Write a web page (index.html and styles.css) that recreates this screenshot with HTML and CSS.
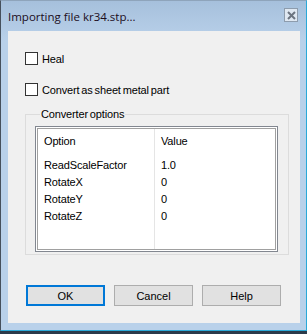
FILE: index.html
```html
<!DOCTYPE html>
<html lang="en">
<head>
    <meta charset="UTF-8">
    <title>Importing file kr34.stp...</title>
    <link rel="stylesheet" href="styles.css">
</head>
<body>
    <div class="window">
        <div class="titlebar">
            <div class="title">Importing file kr34.stp...</div>
            <div class="close">
                <svg width="9" height="9" viewBox="0 0 9 9"><path d="M1 1L8 8M8 1L1 8" stroke="#6b7480" stroke-width="2"/></svg>
            </div>
        </div>
        <div class="client">
            <label class="check"><span class="box"></span>Heal</label>
            <label class="check second"><span class="box"></span>Convert as sheet metal part</label>
            <fieldset class="group">
                <legend>Converter options</legend>
                <div class="list">
                    <div class="row head"><span class="col1">Option</span><span class="col2">Value</span></div>
                    <div class="row"><span class="col1">ReadScaleFactor</span><span class="col2">1.0</span></div>
                    <div class="row"><span class="col1">RotateX</span><span class="col2">0</span></div>
                    <div class="row"><span class="col1">RotateY</span><span class="col2">0</span></div>
                    <div class="row"><span class="col1">RotateZ</span><span class="col2">0</span></div>
                    <div class="row fill"><span class="col1"></span><span class="col2"></span></div>
                </div>
            </fieldset>
            <div class="buttons">
                <button class="btn default">OK</button>
                <button class="btn">Cancel</button>
                <button class="btn">Help</button>
            </div>
        </div>
    </div>
</body>
</html>
```
FILE: styles.css
```css
body {
    margin: 0;
    background: #2b3a4a;
    font-family: "Liberation Sans", Arial, sans-serif;
    font-size: 11px;
    letter-spacing: -0.15px;
    word-spacing: -1px;
    color: #000;
}
.window {
    width: 307px;
    height: 331px;
    box-sizing: border-box;
    border-left: 1px solid #46505c;
    border-top: 1px solid #8ea4bb;
    border-right: 1px solid #2aa9d8;
    border-bottom: 1px solid #2aa9d8;
    background: linear-gradient(#a6c0dc, #b9d1ea 40px);
    padding: 0 6px 7px 7px;
    display: flex;
    flex-direction: column;
}
.titlebar {
    height: 30px;
    display: flex;
    align-items: center;
    justify-content: space-between;
}
.title {
    font-family: "Open Sans", sans-serif;
    font-size: 11.5px;
    letter-spacing: 0;
    word-spacing: 0;
    color: #1c0d1c;
    padding-top: 1px;
}
.close {
    width: 12px;
    height: 12px;
    border: 1px solid #8d9cad;
    background: #dfe8f2;
    display: flex;
    align-items: center;
    justify-content: center;
    margin-right: 2px;
    margin-top: -2px;
}
.client {
    flex: 1;
    background: #f0f0f0;
    padding: 21px 11px 0 17px;
}
.check {
    display: flex;
    align-items: center;
    gap: 4px;
    height: 13px;
}
.check.second {
    margin-top: 18px;
}
.box {
    width: 11px;
    height: 11px;
    border: 1px solid #333;
    background: #fff;
}
.group {
    margin: 12px 0 0 0;
    padding: 6px 10px 7px 9px;
    border: 1px solid #dcdcdc;
    height: 147px;
    box-sizing: border-box;
}
.group legend {
    padding: 0 1px;
    margin-left: 5px;
}
.list {
    border: 1px solid #828790;
    padding: 1px;
    height: 126px;
    box-sizing: border-box;
    background: #fff;
    display: flex;
    flex-direction: column;
    outline: 1px solid #a0a0a0;
    outline-offset: -3px;
}
.row {
    display: flex;
    height: 17px;
    align-items: center;
}
.row.head {
    height: 28px;
    padding-bottom: 2px;
    box-sizing: border-box;
}
.row.fill {
    flex: 1;
}
.col1 {
    width: 118px;
    box-sizing: border-box;
    padding-left: 7px;
    align-self: stretch;
    display: flex;
    align-items: center;
    border-right: 1px solid #e5e5e5;
}
.row.head .col1 {
    margin-bottom: -2px;
    padding-bottom: 2px;
}
.col2 {
    padding-left: 6px;
}
.buttons {
    display: flex;
    gap: 9px;
    margin-top: 30px;
    padding-left: 1px;
}
.btn {
    width: 79px;
    height: 21px;
    font-family: "Liberation Sans", Arial, sans-serif;
    font-size: 11px;
    background: #e1e1e1;
    border: 1px solid #adadad;
    color: #000;
    padding: 0;
}
.btn.default {
    border: 2px solid #0078d7;
}
```
